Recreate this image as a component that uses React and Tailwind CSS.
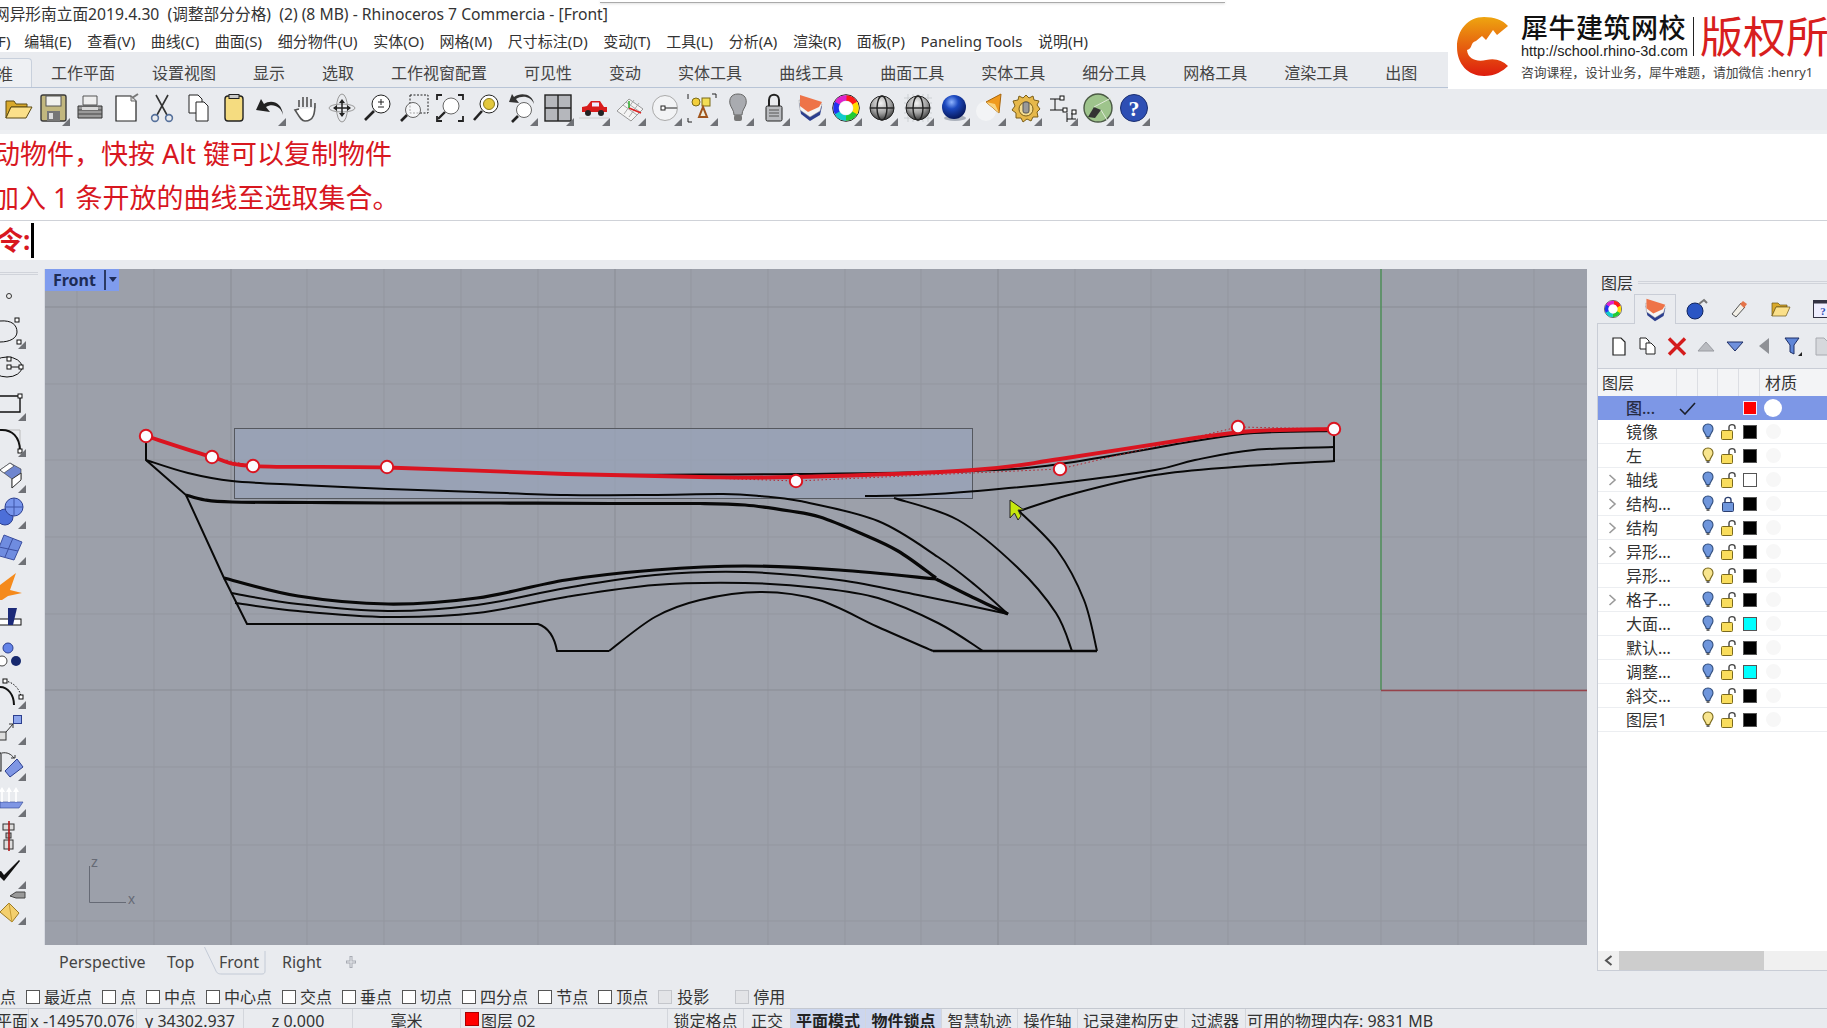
import React from 'react';

const SANS = "[font-family:'Noto_Sans','Noto_Sans_CJK_SC',sans-serif]";

// smooth curve through points (catmull-rom)
function smooth(p) {
    let d = `M${p[0][0]} ${p[0][1]}`;
    for (let i = 0; i < p.length - 1; i++) {
        const a = p[i - 1] || p[i], b = p[i], c = p[i + 1], e = p[i + 2] || c;
        d += ` C${b[0] + (c[0] - a[0]) / 6} ${b[1] + (c[1] - a[1]) / 6} ${c[0] - (e[0] - b[0]) / 6} ${c[1] - (e[1] - b[1]) / 6} ${c[0]} ${c[1]}`;
    }
    return d;
}

const THIN = 2, THICK = 3.2;
const CURVES = [
    { w: THIN, p: [[146, 460], [188, 473], [232, 481], [300, 485], [388, 489], [477, 492], [566, 495], [650, 495], [723, 494], [760, 496], [800, 501], [878, 521], [938, 557], [975, 585], [1008, 614]] },
    { w: THICK, p: [[186, 495], [205, 500], [232, 502], [310, 502.5], [388, 503], [500, 503], [611, 503.5], [700, 503.5], [745, 505], [790, 511], [820, 517], [860, 533], [898, 551], [936, 578]] },
    { w: THICK, p: [[224, 578], [298, 596], [388, 604], [477, 598], [566, 580], [655, 570], [745, 566], [839, 570], [936, 579]] },
    { w: THICK, p: [[936, 579], [970, 596], [1008, 614]] },
    { w: THIN, p: [[231, 593], [298, 604], [388, 611], [477, 605], [566, 588], [655, 575], [745, 572], [839, 580], [918, 595], [1008, 614]] },
    { w: THIN, p: [[235, 603], [298, 611], [388, 617], [477, 613], [566, 597], [655, 585], [745, 583], [819, 588], [878, 598], [938, 623], [983, 651]] },
    { w: THIN, p: [[609, 651], [655, 617], [700, 600], [760, 592], [819, 600], [878, 627], [933, 651]] },
    { w: THIN, p: [[865, 496], [918, 495], [977, 491], [1060, 483], [1155, 470], [1195, 460], [1254, 450], [1334, 447]] },
    { w: THIN, p: [[1019, 511], [1076, 493], [1155, 475], [1234, 467], [1335, 461]] },
    { w: THIN, p: [[894, 498], [958, 520], [1017, 567], [1056, 613], [1072, 651]] },
    { w: THIN, p: [[1019, 511], [1057, 550], [1084, 600], [1097, 651]] },
    { w: THIN, p: [[600, 475], [700, 474.5], [800, 474], [973, 471], [1060, 464], [1195, 441], [1254, 433], [1334, 431]] },
];
const RED = [[146, 436], [212, 457], [253, 466], [387, 467.5], [566, 474], [700, 477], [796, 477], [973, 470], [1060, 459], [1195, 438], [1254, 431], [1334, 429]];
const HANDLES = [[146, 436], [212, 457], [253, 466], [387, 467], [796, 481], [1060, 469], [1238, 427], [1334, 429]];
const VX = [77, 154, 231, 307, 384, 461, 538, 615, 691, 768, 845, 921, 998, 1075, 1151, 1228, 1305, 1381, 1458, 1534];
const HY = [307, 384, 460, 537, 614, 690, 767, 845, 921];
const MAJOR_V = [231, 615, 998];
const MAJOR_H = [307, 690];

function Viewport() {
    return (
        <div className="relative flex-1 h-[676px] bg-[#9ca0aa] overflow-hidden">
            <svg width="1542" height="676" viewBox="45 269 1542 676" className="block">
                {VX.map(x => <line key={x} x1={x} x2={x} y1="269" y2="945" stroke={MAJOR_V.includes(x) ? '#898c94' : '#93969f'} strokeWidth="1" />)}
                {HY.map(y => <line key={y} y1={y} y2={y} x1="45" x2="1587" stroke={MAJOR_H.includes(y) ? '#898c94' : '#93969f'} strokeWidth="1" />)}
                <line x1="1381" x2="1381" y1="269" y2="690" stroke="#4f8f5a" strokeWidth="1.5" />
                <line x1="1381" x2="1587" y1="690.5" y2="690.5" stroke="#96424a" strokeWidth="1.5" />

                <rect x="234.5" y="428.5" width="738" height="70" fill="#98a3b8" fillOpacity="0.75" stroke="#55585f" />

                {CURVES.map((c, i) => <path key={i} d={smooth(c.p)} fill="none" stroke="#080808" strokeWidth={c.w} />)}
                <path d="M146 436V460L186 495L224 578L247 624H538C550 628 555 640 557 651H609" fill="none" stroke="#080808" strokeWidth={THIN} />
                <path d="M933 651H1097" fill="none" stroke="#080808" strokeWidth="2.4" />
                <path d="M1334 429V461" fill="none" stroke="#080808" strokeWidth={THIN} />

                <polyline points={HANDLES.map(p => p.join(',')).join(' ')} fill="none" stroke="#b6202c" strokeWidth="1" strokeDasharray="1.5 2.5" />
                <path d={smooth(RED)} fill="none" stroke="#da1420" strokeWidth="3.8" />
                {HANDLES.map(p => <circle key={p[0]} cx={p[0]} cy={p[1]} r="6.2" fill="#fbfbff" stroke="#da1420" strokeWidth="2" />)}

                <path d="M1010 500L1010 518L1014.5 513L1018 520L1021 516L1018 510L1024 510Z" fill="#c6e80e" stroke="#222" strokeWidth="1" />

                <path d="M89.5 866V902.5H126" fill="none" stroke="#666a75" strokeWidth="1" />
                <text x="91" y="867" fontSize="14" fill="#666a75" fontFamily="Liberation Sans">z</text>
                <text x="128" y="904" fontSize="14" fill="#666a75" fontFamily="Liberation Sans">x</text>
            </svg>
            <div className={`absolute left-0 top-0 w-[74px] h-[22px] bg-[#7f9cee] flex items-center pl-[8px] text-[16px] font-bold text-[#1d2b55] ${SANS}`}>
                <span className="w-[52px]">Front</span>
                <span className="w-[2px] h-[20px] bg-[#2c3a63]"></span>
                <svg width="12" height="8" viewBox="0 0 12 8" className="ml-[1px]"><path d="M2 1H10L6 6Z" fill="#1d2b55" /></svg>
            </div>
        </div>
    );
}

const Wheel = ({ size = 28 }) => (
    <svg width={size} height={size} viewBox="0 0 28 28">
        <circle cx="14" cy="14" r="13.3" fill="none" stroke="#222" strokeWidth="1" />
        {['#ff1a1a', '#ffdd00', '#22cc33', '#11cccc', '#2233ee', '#dd22cc'].map((c, i) => (
            <circle key={c} cx="14" cy="14" r="10" fill="none" stroke={c} strokeWidth="5.5" pathLength="6" strokeDasharray="1.05 4.95" strokeDashoffset={-i + 1.5} />
        ))}
        <circle cx="14" cy="14" r="6.8" fill="#fff" />
    </svg>
);

const Layers = ({ size = 28 }) => (
    <svg width={size} height={size} viewBox="0 0 28 28">
        <path d="M3 9L26 12L24 21L14 27L5 20Z" fill="#2c3f8f" />
        <path d="M3 6L26 10L24 17L14 23L4 16Z" fill="#f4f4f4" stroke="#999" strokeWidth=".5" />
        <path d="M4 1L26 8L23 13L12 18L4 12Z" fill="#ee7348" />
    </svg>
);

const BlueBall = ({ size = 28 }) => (
    <svg width={size} height={size} viewBox="0 0 28 28">
        <defs><radialGradient id="ball" cx=".4" cy=".3" r=".7"><stop offset="0" stopColor="#8fb4ff" /><stop offset=".4" stopColor="#1c49c0" /><stop offset="1" stopColor="#07185c" /></radialGradient></defs>
        <ellipse cx="15" cy="24" rx="11" ry="3" fill="#aab0bb" />
        <circle cx="14" cy="13" r="12" fill="url(#ball)" />
    </svg>
);

const GraySphere = () => (
    <>
        <defs><radialGradient id="gs" cx=".45" cy=".3" r=".75"><stop offset="0" stopColor="#f4f4f4" /><stop offset=".55" stopColor="#a0a0a0" /><stop offset="1" stopColor="#2c2c2c" /></radialGradient></defs>
        <circle cx="15" cy="15" r="12" fill="url(#gs)" stroke="#222" />
        <ellipse cx="15" cy="15" rx="5" ry="12" fill="none" stroke="#222" strokeWidth="1.4" />
        <path d="M3 15H27" stroke="#222" strokeWidth="1.4" />
    </>
);

const S = ({ children }) => <svg width="30" height="30" viewBox="0 0 30 30">{children}</svg>;

const TOOLS = [
    [<S><path d="M3 8H11L13 11H24V14H8L3 25Z" fill="#d9a92b" stroke="#5c4a12" /><path d="M8 14H29L23 25H3Z" fill="#fbe08a" stroke="#5c4a12" /></S>, false],
    [<S><rect x="2" y="2" width="25" height="26" rx="2" fill="#c2b77e" stroke="#3a3a3a" strokeWidth="1.4" /><rect x="7" y="3" width="15" height="10" fill="#f1f1ef" stroke="#555" /><rect x="8" y="18" width="13" height="10" fill="#777" /><rect x="10" y="20" width="4" height="6" fill="#ddd" /></S>, true],
    [<S><path d="M8 3H22V12H8Z" fill="#eee" stroke="#555" /><path d="M3 13H27V25H3Z" fill="#9a9a9a" stroke="#333" /><path d="M3 17H27M3 21H27" stroke="#444" /><rect x="7" y="14" width="16" height="3" fill="#d8d8d8" /></S>, false],
    [<S><path d="M5 3H20L25 8V28H5Z" fill="#fff" stroke="#222" strokeWidth="1.2" /><path d="M20 3V8H25" fill="#ddd" stroke="#666" /><path d="M21 5L27 1" stroke="#777" strokeWidth="2" /></S>, false],
    [<S><path d="M9 2L20 22M21 2L10 22" stroke="#333" strokeWidth="1.6" /><circle cx="8" cy="25" r="3.4" fill="none" stroke="#56719c" strokeWidth="1.6" /><circle cx="22" cy="25" r="3.4" fill="none" stroke="#56719c" strokeWidth="1.6" /></S>, false],
    [<S><path d="M6 2H15L19 6V20H6Z" fill="#fff" stroke="#222" /><path d="M13 9H21L25 13V28H13Z" fill="#fff" stroke="#222" /></S>, false],
    [<S><rect x="6" y="3" width="18" height="25" rx="3" fill="#f5dc80" stroke="#222" strokeWidth="1.4" /><rect x="10" y="1.5" width="10" height="4" fill="#c9c9c9" stroke="#222" /></S>, false],
    [<S><path d="M28 22C26 13 17 10 11 14L15 19L1 17L6 6L9 11C16 6 27 9 28 22Z" fill="#222" /></S>, true],
    [<S><path d="M8 14V7M12 14V4M16 14V4M20 14V6M24 15V10C24 20 23 28 14 28C10 28 8 23 4 17L8 16" fill="#fff" stroke="#555" strokeWidth="1.6" /></S>, false],
    [<S><ellipse cx="15" cy="15" rx="5.5" ry="14" fill="none" stroke="#999" /><ellipse cx="15" cy="15" rx="13" ry="4" fill="none" stroke="#999" /><path d="M15 8V23M8 15H23" stroke="#222" strokeWidth="1.5" /><path d="M15 6L18 10H12ZM15 24L12 20H18ZM24 15L20 18V12ZM6 15L10 12V18Z" fill="#222" /></S>, false],
    [<S><circle cx="18" cy="11" r="9" fill="#fff" stroke="#222" /><path d="M11 18L2 27" stroke="#222" strokeWidth="2.6" /><path d="M18 6V12M15 9H21M15 14H21" stroke="#222" /></S>, false],
    [<S><rect x="11" y="2" width="18" height="18" fill="none" stroke="#222" strokeDasharray="2 1.5" /><circle cx="14" cy="17" r="7.5" fill="#fff" fillOpacity=".6" stroke="#666" /><path d="M8 22L2 28" stroke="#222" strokeWidth="2.6" /></S>, false],
    [<S><path d="M2 7V2H7M23 2H28V7M28 23V28H23M7 28H2V23" fill="none" stroke="#222" strokeWidth="1.8" /><circle cx="16" cy="13" r="8" fill="#fff" stroke="#666" /><path d="M10 19L3 26" stroke="#222" strokeWidth="2.4" /></S>, false],
    [<S><circle cx="18" cy="11" r="9" fill="#fff" stroke="#222" /><circle cx="18" cy="11" r="5.5" fill="#e3c83c" stroke="#8a7a1a" /><path d="M11 18L3 27" stroke="#222" strokeWidth="2.6" /></S>, false],
    [<S><circle cx="17" cy="17" r="7.5" fill="#fff" stroke="#666" /><path d="M11 23L5 29" stroke="#222" strokeWidth="2.6" /><path d="M27 11C24 3 15 2 9 6L12 10L2 9L5 1L7 4C14 -1 26 1 27 11Z" fill="#333" /></S>, true],
    [<S><rect x="2" y="2" width="26" height="26" fill="#b5b7bc" stroke="#222" strokeWidth="1.4" /><path d="M15 2V28M2 15H28" stroke="#222" strokeWidth="1.4" /></S>, true],
    [<S><path d="M3 19V14L8 13L12 8H21L25 14H28V19Z" fill="#d81c1c" /><rect x="13" y="9.5" width="7" height="4" fill="#eef" /><circle cx="9" cy="20" r="3" fill="#222" /><circle cx="22" cy="20" r="3" fill="#222" /><path d="M0 25H30" stroke="#ccc" /></S>, true],
    [<S><path d="M2 18L14 6L28 16L16 28Z" fill="#f4f4f4" stroke="#999" /><path d="M8 12L22 22M11 9L25 19M14 24L24 10M9 21L19 7" stroke="#aaa" /><path d="M14 15L26 20" stroke="#d22" strokeWidth="1.6" /><path d="M14 15V8" stroke="#2a2" strokeWidth="1.4" /></S>, true],
    [<S><circle cx="14" cy="15" r="12.5" fill="#f2f3f5" stroke="#aaa" /><rect x="10" y="13" width="4" height="4" fill="#fff" stroke="#222" /><path d="M14 15H26" stroke="#222" /></S>, true],
    [<S><path d="M1 6V1M25 1H29V5M1 25V29H5" fill="none" stroke="#222" /><circle cx="9" cy="9" r="4" fill="#f3cf3c" stroke="#7a6a18" /><rect x="15" y="5" width="8" height="8" fill="#f3dd55" stroke="#7a6a18" /><path d="M12 24L16 14L20 24Z" fill="#eed" stroke="#a0541c" strokeWidth="2" /></S>, true],
    [<S><path d="M15 1C8 1 6 6 7 11C8 15 11 17 11 22H19C19 17 22 15 23 11C24 6 22 1 15 1Z" fill="#a9abb0" stroke="#666" /><rect x="11" y="22" width="8" height="6" rx="2" fill="#777" /></S>, true],
    [<S><path d="M10 13V7C10 0 20 0 20 7V13" fill="none" stroke="#222" strokeWidth="2" /><rect x="7" y="13" width="16" height="15" rx="1.5" fill="#b9bbbf" stroke="#222" /><path d="M10 17H20M10 20H20M10 23H20" stroke="#555" /></S>, true],
    [<Layers />, true],
    [<Wheel />, true],
    [<S><GraySphere /></S>, true],
    [<S><path d="M1 5H29M1 10H29M1 15H29M1 20H29M1 25H29M5 1V29M10 1V29M15 1V29M20 1V29M25 1V29" stroke="#c2c4c8" strokeWidth=".7" /><GraySphere /></S>, true],
    [<BlueBall />, true],
    [<S><circle cx="11" cy="18" r="10" fill="#f3f4f6" /><path d="M26 1L24 20L11 9Z" fill="#f09a1e" stroke="#a8660e" /><path d="M24 20L11 9L20 11Z" fill="#f9d480" /></S>, true],
    [<S><path d="M15 2L18 5L22 3L23 7L28 8L26 12L29 16L26 19L27 24L22 24L20 28L16 26L12 29L10 25L5 25L5 20L1 17L4 13L2 8L7 7L8 3L12 5Z" fill="#e6b84a" stroke="#7c5f18" /><circle cx="15" cy="16" r="7" fill="#f4dc90" stroke="#7c5f18" /><rect x="12" y="9" width="6" height="11" rx="2" fill="#999" stroke="#555" /></S>, true],
    [<S><path d="M3 6H13M3 17H16M8 6V17M20 20V29M20 26H29M25 20V26" fill="none" stroke="#111" /><rect x="13" y="3" width="4" height="4" fill="#fff" stroke="#111" /><rect x="16" y="15" width="4" height="4" fill="#fff" stroke="#111" /><rect x="25" y="17" width="4" height="4" fill="#fff" stroke="#111" /></S>, true],
    [<S><circle cx="15" cy="15" r="14" fill="#9ec48c" stroke="#4b5a45" strokeWidth="1.4" /><path d="M5 24L11 14L18 17L12 25Z" fill="#333" /><path d="M11 14L28 5M18 17L24 27" stroke="#dfe9d8" /></S>, true],
    [<S><circle cx="15" cy="15" r="13.5" fill="#2e4fb4" stroke="#1b2f70" /><text x="15" y="23" textAnchor="middle" fontSize="22" fontWeight="bold" fill="#fff" fontFamily="Liberation Serif">?</text></S>, true],
];

const Tri = ({ className }) => (
    <svg width="8" height="8" viewBox="0 0 8 8" className={`absolute ${className}`}><path d="M8 0V8H0Z" fill="#6f7176" /></svg>
);

function Toolbar() {
    return (
        <div className="h-[46px] bg-[#e9ebef] border-t border-b-[4px] border-t-[#e9ebef] border-b-[#edeff2] flex">
            {TOOLS.map(([icon, tri], i) => (
                <div key={i} className="relative w-[36px] h-[37px] flex items-center justify-center">
                    {icon}
                    {tri && <Tri className="right-[2px] bottom-0" />}
                </div>
            ))}
        </div>
    );
}

const B = '#111';
const SIDE = [
    [<circle cx="9" cy="19" r="2.5" fill="#eee" stroke="#333" />, false],
    [<><path d="M0 8C12 7 17 12 17 19C17 25 10 29 0 29" fill="none" stroke={B} /><rect x="15" y="5" width="4" height="4" fill="#fff" stroke={B} /><rect x="17" y="27" width="4" height="4" fill="#fff" stroke={B} /></>, true],
    [<><ellipse cx="7" cy="18" rx="15" ry="10" fill="none" stroke={B} /><path d="M9 18H21" stroke={B} /><rect x="7" y="8" width="4" height="4" fill="#fff" stroke={B} /><rect x="7" y="16" width="4" height="4" fill="#fff" stroke={B} /><rect x="19" y="16" width="4" height="4" fill="#fff" stroke={B} /></>, false],
    [<><path d="M0 11H20V27H0" fill="none" stroke={B} strokeWidth="1.4" /><rect x="18" y="9" width="4" height="4" fill="#fff" stroke={B} /></>, true],
    [<><path d="M0 9H20V30" fill="none" stroke="#bbb" /><path d="M0 9C12 8 20 16 20 30" fill="none" stroke={B} strokeWidth="2" /><rect x="18" y="28" width="4" height="4" fill="#fff" stroke={B} /></>, true],
    [<><path d="M0 13L10 6L21 12V22L12 31V22L0 13Z" fill="#6f86cf" stroke="#333" strokeWidth=".6" /><path d="M0 13L10 6L14 9L4 16Z" fill="#fff" stroke="#333" strokeWidth=".6" /><path d="M12 22L21 16V23L12 31Z" fill="#fff" stroke="#333" /></>, true],
    [<><circle cx="5" cy="24" r="8" fill="#4d6fd8" stroke="#2c3f8f" /><circle cx="14" cy="14" r="9" fill="#7795ec" stroke="#2c3f8f" /><path d="M5 14H23M14 5V23" stroke="#3f55a8" /></>, true],
    [<path d="M4 6L22 13L14 31L-4 26Z M13 9L5 28 M-1 18L18 22" fill="#6f8ce0" stroke="#3c4fa0" />, true],
    [<path d="M16 8L10 25L22 28L8 31L2 35H0V20Z" fill="#f58a1c" />, false],
    [<><rect x="-1" y="18" width="22" height="6" fill="#fff" stroke={B} /><path d="M8 7H17L13 24H8Z" fill="#1c2a78" /></>, false],
    [<><circle cx="8" cy="11" r="5" fill="#6484e8" stroke="#2c3f8f" /><circle cx="2" cy="24" r="5" fill="#fff" stroke="#444" /><circle cx="16" cy="24" r="5" fill="#17296e" /></>, false],
    [<><path d="M0 14C8 14 14 22 14 32" fill="none" stroke={B} strokeWidth="2" /><path d="M5 8C13 9 19 15 21 23" fill="none" stroke={B} strokeDasharray="1.5 1.5" /><rect x="3" y="6" width="4" height="4" fill="#fff" stroke={B} /><rect x="19" y="22" width="4" height="4" fill="#fff" stroke={B} /></>, true],
    [<><rect x="-3" y="23" width="9" height="8" fill="#ddd" stroke="#333" /><rect x="13.5" y="6.5" width="8" height="8" fill="#8ea6ec" stroke="#2c3f8f" /><path d="M6 23L13 15M9 15H13V19" fill="none" stroke="#333" /></>, true],
    [<><rect x="-5" y="8" width="6" height="18" fill="none" stroke={B} /><path d="M17 14L23 22L10 32L5 26Z" fill="#7f96e4" stroke="#2c3f8f" /><path d="M2 8C7 7 11 9 14 13M11 13H15V10" fill="none" stroke="#333" /></>, true],
    [<><path d="M0 21H23L19 27H0Z" fill="#7f96e4" stroke="#2c3f8f" strokeWidth=".6" /><path d="M2 21V9M9 21V9M16 21V9" stroke="#fff" strokeWidth="1.6" /><path d="M2 6L5 11H-1ZM9 6L12 11H6ZM16 6L19 11H13Z" fill="#fff" /></>, true],
    [<><rect x="3" y="7" width="11" height="6" fill="#ddd" stroke="#333" /><rect x="6" y="16" width="5" height="5" fill="#bbb" stroke="#333" /><rect x="4" y="23" width="9" height="9" fill="#ddd" stroke="#333" /><path d="M9 4V34" stroke="#b01818" strokeWidth="1.6" /></>, true],
    [<path d="M-2 19L1 18L4 22L19 7L20 8L4 28L-2 22Z" fill={B} />, true],
    [<><path d="M10 7L16 3H25V9H16Z" fill="#999" stroke="#444" /><path d="M9 14L19 24L12 33L0 23Z" fill="#f3cf6d" stroke="#9b7a25" /><path d="M9 14L12 33" stroke="#c79d35" /></>, true],
];

function LeftBar() {
    return (
        <div className="w-[45px] h-[676px] flex flex-col overflow-hidden border-r border-[#d8dbe2]">
            <div className="h-[8px] flex flex-col justify-center"><div className="h-[3px] w-[38px] border-y border-[#d0d3da]"></div></div>
            {SIDE.map(([icon, tri], i) => (
                <div key={i} className="relative h-[36px] shrink-0">
                    <svg width="30" height="36" viewBox="0 0 30 36" className="block">{icon}</svg>
                    {tri && <Tri className="left-[18px] bottom-0" />}
                </div>
            ))}
        </div>
    );
}

const Bulb = ({ on }) => (
    <svg width="12" height="17" viewBox="0 0 12 17">
        <path d="M6 1C2.5 1 1 3.5 1 6C1 9 4 10.5 4.2 13.5H7.8C8 10.5 11 9 11 6C11 3.5 9.5 1 6 1Z" fill={on ? '#6f96dc' : '#f8e58f'} stroke={on ? '#34507f' : '#7b6a1e'} strokeWidth="1.1" />
        <path d="M4.5 15H7.5" stroke="#444" strokeWidth="1.6" />
    </svg>
);

const Lock = ({ closed }) => (
    <svg width="17" height="17" viewBox="0 0 17 17">
        {closed
            ? <path d="M5 8V5C5 1.5 11 1.5 11 5V8" fill="none" stroke="#2c3f6f" strokeWidth="1.4" />
            : <path d="M9 8V4C9 .8 15 .8 15 4V6" fill="none" stroke="#444" strokeWidth="1.4" />}
        <rect x={closed ? 2.5 : 1.5} y="7.5" width="11" height="9" rx="1" fill={closed ? '#6f96dc' : '#f9dd5c'} stroke={closed ? '#2c3f6f' : '#7b6a1e'} />
    </svg>
);

const LAYERS = [
    { name: '镜像', on: true, color: 'bg-black' },
    { name: '左', on: false, color: 'bg-black' },
    { name: '轴线', on: true, color: 'bg-white', arrow: true },
    { name: '结构...', on: true, closed: true, color: 'bg-black', arrow: true },
    { name: '结构', on: true, color: 'bg-black', arrow: true },
    { name: '异形...', on: true, color: 'bg-black', arrow: true },
    { name: '异形...', on: false, color: 'bg-black' },
    { name: '格子...', on: true, color: 'bg-black', arrow: true },
    { name: '大面...', on: true, color: 'bg-[#00ffff]' },
    { name: '默认...', on: true, color: 'bg-black' },
    { name: '调整...', on: true, color: 'bg-[#00ffff]' },
    { name: '斜交...', on: true, color: 'bg-black' },
    { name: '图层1', on: false, color: 'bg-black' },
];

const PANEL_TABS = [
    <Wheel size={18} />,
    <Layers size={24} />,
    <svg width="26" height="22" viewBox="0 0 26 22"><circle cx="11" cy="13" r="8" fill="#2a55c4" stroke="#10245f" /><path d="M15 6L20 2L23 5" fill="none" stroke="#777" strokeWidth="2" /></svg>,
    <svg width="18" height="20" viewBox="0 0 18 20"><path d="M2 15L11 4L15 8L6 18Z" fill="#f2efe6" stroke="#555" /><path d="M10 5L13 2L17 5L14 9Z" fill="#e4744a" /></svg>,
    <svg width="20" height="16" viewBox="0 0 20 16"><path d="M1 2H7L9 4H16V6H5L1 15Z" fill="#d9a92b" stroke="#6b5414" strokeWidth=".7" /><path d="M5 6H19L15 15H1Z" fill="#fbe08a" stroke="#6b5414" strokeWidth=".7" /></svg>,
    <svg width="20" height="18" viewBox="0 0 20 18"><rect x=".5" y=".5" width="19" height="17" fill="#eef" stroke="#334" /><rect x=".5" y=".5" width="19" height="3" fill="#334" /><text x="10" y="15" textAnchor="middle" fontSize="11" fontWeight="bold" fill="#2e4fb4" fontFamily="Liberation Serif">?</text></svg>,
];

const PANEL_TOOLS = [
    <svg width="16" height="19" viewBox="0 0 16 19"><path d="M2 1H10L14 5V18H2Z" fill="#fff" stroke="#222" strokeWidth="1.2" /></svg>,
    <svg width="17" height="18" viewBox="0 0 17 18"><path d="M1 1H7L10 4V12H1Z" fill="#fff" stroke="#222" /><path d="M7 6H12L16 10V17H7Z" fill="#fff" stroke="#222" /></svg>,
    <svg width="20" height="19" viewBox="0 0 20 19"><path d="M2 1.5L18 17.5M18 1.5L2 17.5" stroke="#d41c1c" strokeWidth="3.4" /></svg>,
    <svg width="18" height="11" viewBox="0 0 18 11"><path d="M9 1L17 10H1Z" fill="#b9bbc0" stroke="#9a9ca2" /></svg>,
    <svg width="18" height="11" viewBox="0 0 18 11"><path d="M1 1H17L9 10Z" fill="#6f90dc" stroke="#1f2f66" /></svg>,
    <svg width="12" height="18" viewBox="0 0 12 18"><path d="M11 1V17L1 9Z" fill="#8f9196" /></svg>,
    <svg width="18" height="19" viewBox="0 0 18 19"><path d="M1 1H15L10 8V17L6 15V8Z" fill="#5f86d8" stroke="#1f2f66" /><path d="M18 19V15L14 19Z" fill="#222" /></svg>,
    <svg width="16" height="19" viewBox="0 0 16 19"><path d="M2 1H10L14 5V18H2Z" fill="#d6d8dc" stroke="#a8aab0" /></svg>,
];

function LayerPanel() {
    return (
        <div className={`w-[240px] h-[725px] bg-[#e9ebef] flex flex-col text-[16px] text-[#333] ${SANS}`}>
            <div className="h-[34px] pt-[11px] pl-[14px] flex items-center shrink-0">
                <span className="leading-none">图层</span>
                <span className="flex-1 ml-[5px] h-[3px] border-y border-[#d0d3da]"></span>
            </div>
            <div className="h-[29px] flex pl-[5px] shrink-0">
                {PANEL_TABS.map((t, i) => (
                    <div key={i} className={`w-[42px] shrink-0 flex items-center justify-center ${i === 1 ? 'border border-b-0 border-[#c9cdd6] h-[30px] bg-[#e9ebef] relative z-10' : ''}`}>{t}</div>
                ))}
            </div>
            <div className="ml-[10px] h-[648px] border border-r-0 border-[#c9cdd6] flex flex-col">
                <div className="h-[45px] flex items-center pl-[6px] border-b border-[#c9cdd6] shrink-0 overflow-hidden">
                    {PANEL_TOOLS.map((t, i) => <div key={i} className="w-[29px] shrink-0 flex justify-center">{t}</div>)}
                </div>
                <div className="h-[27px] flex bg-[#f3f4f6] shrink-0 items-center">
                    <span className="w-[79px] pl-[4px] h-full flex items-center border-r border-[#dcdee3]">图层</span>
                    <span className="w-[21px] h-full border-r border-[#dcdee3]"></span>
                    <span className="w-[20px] h-full border-r border-[#dcdee3]"></span>
                    <span className="w-[21px] h-full border-r border-[#dcdee3]"></span>
                    <span className="w-[21px] h-full border-r border-[#dcdee3]"></span>
                    <span className="pl-[5px]">材质</span>
                </div>
                <div className="h-[24px] flex items-center bg-[#7d97e6] shrink-0">
                    <span className="w-[28px]"></span>
                    <span className="w-[50px] font-medium text-[#262c44]">图...</span>
                    <span className="w-[22px] flex justify-center"><svg width="17" height="13" viewBox="0 0 17 13"><path d="M1 7L6 12L16 1" fill="none" stroke="#1b1f2b" strokeWidth="1.6" /></svg></span>
                    <span className="w-[41px]"></span>
                    <span className="w-[21px] flex justify-center"><span className="w-[14px] h-[14px] bg-[#ff0000] border border-[#eef]"></span></span>
                    <span className="w-[26px] flex justify-center"><span className="w-[18px] h-[18px] rounded-full bg-white"></span></span>
                </div>
                {LAYERS.map((l, i) => (
                    <div key={i} className="h-[24px] flex items-center border-b border-[#eceef1] bg-white shrink-0">
                        <span className="w-[28px] flex justify-center">
                            {l.arrow && <svg width="9" height="12" viewBox="0 0 9 12"><path d="M1.5 1L7 6L1.5 11" fill="none" stroke="#9a9a9a" strokeWidth="1.6" /></svg>}
                        </span>
                        <span className="w-[50px] whitespace-nowrap">{l.name}</span>
                        <span className="w-[22px]"></span>
                        <span className="w-[20px] flex justify-center"><Bulb on={l.on} /></span>
                        <span className="w-[21px] flex justify-center"><Lock closed={l.closed} /></span>
                        <span className="w-[21px] flex justify-center"><span className={`w-[14px] h-[14px] border border-[#555] ${l.color}`}></span></span>
                        <span className="w-[26px] flex justify-center"><span className="w-[15px] h-[15px] rounded-full bg-[#f7f7f7]"></span></span>
                    </div>
                ))}
                <div className="flex-1 bg-white"></div>
                <div className="h-[19px] flex bg-[#f0f0f0] shrink-0">
                    <span className="w-[21px] flex items-center justify-center"><svg width="9" height="11" viewBox="0 0 9 11"><path d="M7.5 1L2 5.5L7.5 10" fill="none" stroke="#555" strokeWidth="2" /></svg></span>
                    <span className="w-[145px] bg-[#cdcdcd]"></span>
                </div>
            </div>
        </div>
    );
}

const MENU = ['编辑(E)', '查看(V)', '曲线(C)', '曲面(S)', '细分物件(U)', '实体(O)', '网格(M)', '尺寸标注(D)', '变动(T)', '工具(L)', '分析(A)', '渲染(R)', '面板(P)', 'Paneling Tools', '说明(H)'];
const TABS = ['工作平面', '设置视图', '显示', '选取', '工作视窗配置', '可见性', '变动', '实体工具', '曲线工具', '曲面工具', '实体工具', '细分工具', '网格工具', '渲染工具', '出图'];
const SNAPS = ['最近点', '点', '中点', '中心点', '交点', '垂点', '切点', '四分点', '节点', '顶点'];
const STATUS = [
    { t: '平面', w: 'w-[29px] justify-end' },
    { t: 'x -149570.076', w: 'w-[108px] justify-center' },
    { t: 'y 34302.937', w: 'w-[107px] justify-center' },
    { t: 'z 0.000', w: 'w-[109px] justify-center' },
    { t: '毫米', w: 'w-[108px] justify-center' },
];
const STATUS2 = [
    { t: '锁定格点', w: 'w-[76px]' },
    { t: '正交', w: 'w-[47px]' },
    { t: '平面模式', w: 'w-[75px]', on: true },
    { t: '物件锁点', w: 'w-[76px]', on: true },
    { t: '智慧轨迹', w: 'w-[76px]' },
    { t: '操作轴', w: 'w-[60px]' },
    { t: '记录建构历史', w: 'w-[107px]' },
    { t: '过滤器', w: 'w-[61px]' },
];

export default function App() {
    return (
        <div className={`relative w-[1827px] h-[1028px] overflow-hidden bg-[#e9ebef] text-[#333] flex flex-col ${SANS}`}>
            {/* dialog edge at the very top */}
            <div className="absolute left-[600px] top-0 w-[625px] h-[3px] bg-white border-b border-[#aaa] shadow-sm z-10"></div>

            {/* watermark */}
            <div className="absolute right-0 top-0 w-[379px] h-[89px] bg-white z-10 overflow-hidden flex items-start">
                <svg width="73" height="89" viewBox="0 0 73 89" className="shrink-0">
                    <defs><linearGradient id="logo" x1="0" y1="0" x2="0" y2="1"><stop offset="0" stopColor="#eea510" /><stop offset="1" stopColor="#de1c0e" /></linearGradient></defs>
                    <path d="M60 26C55 20 46 17 36 17C20 17 9 30 9 47C9 64 20 76 36 76C47 76 55 71 60 66C54 60 47 58 38 60C30 62 20 60 19 50C25 49 22 42 28 41L34 36L38 40L45 30L49 35Z" fill="url(#logo)" />
                </svg>
                <div className="w-[172px] shrink-0 flex flex-col pt-[13px]">
                    <span className="h-[30px] text-[27px] leading-[30px] font-medium text-[#111] whitespace-nowrap tracking-[0.5px]">犀牛建筑网校</span>
                    <span className="h-[16px] text-[14.5px] leading-[16px] text-[#222] whitespace-nowrap [font-family:'Liberation_Sans',sans-serif]">http://school.rhino-3d.com</span>
                    <span className="mt-[4px] text-[12.8px] leading-[18px] text-[#444] whitespace-nowrap">咨询课程，设计业务，犀牛难题，请加微信 :henry1</span>
                </div>
                <span className="w-[1px] h-[39px] mt-[17px] bg-[#222] shrink-0"></span>
                <span className="ml-[6px] text-[43px] leading-[52px] mt-[11px] text-[#d81e1e] whitespace-nowrap">版权所有</span>
            </div>

            {/* title + menu */}
            <div className="h-[26px] bg-white flex items-end shrink-0 overflow-hidden">
                <span className="-ml-[6px] text-[15.7px] leading-[24px] whitespace-pre text-[#333]">网异形南立面2019.4.30  (调整部分分格)  (2) (8 MB) - Rhinoceros 7 Commercia - [Front]</span>
            </div>
            <div className="h-[26px] pt-[4px] bg-white flex items-center shrink-0 text-[15px] text-[#333] gap-[15.6px] overflow-hidden whitespace-nowrap">
                <span className="-ml-[2px] -mr-[2px]">F)</span>
                {MENU.map(m => <span key={m}>{m}</span>)}
            </div>

            {/* ribbon tabs */}
            <div className="h-[36px] flex items-end shrink-0 text-[16px] text-[#444] border-b border-[#b8c4d6] overflow-hidden whitespace-nowrap">
                <span className="relative -ml-[3px] h-[30px] w-[35px] flex items-center justify-end pr-[18px] bg-[#eef0f3] border-r border-t border-[#c8d0dc] rounded-tr -mb-px">准</span>
                <span className="flex gap-[37px] h-[35px] pt-[6px] items-center ml-[19px]">
                    {TABS.map((t, i) => <span key={i}>{t}</span>)}
                </span>
            </div>

            <Toolbar />

            {/* command area */}
            <div className="h-[87px] bg-white border-b border-[#cfd2d8] shrink-0 text-[27px] text-[#d8171f] overflow-hidden whitespace-nowrap">
                <div className="h-[41px] flex items-center -ml-[7px]">动物件，快按 Alt 键可以复制物件</div>
                <div className="h-[45px] pt-[2px] flex items-center -ml-[8px]">加入 1 条开放的曲线至选取集合。</div>
            </div>
            <div className="h-[39px] bg-white shrink-0 flex items-center overflow-hidden">
                <span className="-ml-[3px] text-[26px] font-bold text-[#d8171f] w-[34px]">令:</span>
                <span className="w-[3px] h-[35px] bg-black"></span>
            </div>

            {/* main */}
            <div className="flex h-[725px] shrink-0">
                <div className="w-[1587px] flex flex-col">
                    <div className="h-[9px]"></div>
                    <div className="flex">
                        <LeftBar />
                        <Viewport />
                    </div>
                    <div className="h-[40px] flex items-center pl-[59px] text-[16px] text-[#444] pb-[7px]">
                        <span className="w-[108px]">Perspective</span>
                        <span className="w-[37px]">Top</span>
                        <span className="relative w-[78px] pl-[15px] h-[29px] flex items-center">
                            Front
                            <svg width="62" height="30" viewBox="0 0 62 30" className="absolute left-0 top-0"><path d="M.5 0L12 24C13 26 14 27 18 27H58C60 27 61 26 61 24V4" fill="none" stroke="#c3cad6" /></svg>
                        </span>
                        <span className="w-[63px]">Right</span>
                        <svg width="12" height="14" viewBox="0 0 12 14"><path d="M6 1V13M1 7H11" stroke="#a8abb3" strokeWidth="3" /><path d="M6 2V12M2 7H10" stroke="#e9ebef" strokeWidth="1" /></svg>
                    </div>
                </div>
                <LayerPanel />
            </div>

            {/* osnap row */}
            <div className="h-[23px] flex items-center shrink-0 text-[16px] text-[#333] overflow-hidden whitespace-nowrap">
                <span className="-ml-[16px] w-[42px] shrink-0">端点</span>
                {SNAPS.map(s => (
                    <span key={s} className="flex items-center mr-[10px] shrink-0">
                        <span className="w-[14px] h-[14px] mr-[4px] bg-white border border-[#555]"></span>{s}
                    </span>
                ))}
                <span className="flex items-center shrink-0 mr-[26px]">
                    <span className="w-[14px] h-[14px] mr-[5px] bg-[#e3e4e7] border border-[#c4c6cb]"></span>投影
                </span>
                <span className="flex items-center shrink-0">
                    <span className="w-[14px] h-[14px] mr-[4px] bg-[#e3e4e7] border border-[#c4c6cb]"></span>停用
                </span>
            </div>

            {/* status row */}
            <div className="h-[20px] flex border-t border-[#c4c8d0] shrink-0 text-[16px] text-[#333] overflow-hidden whitespace-nowrap leading-[24px]">
                {STATUS.map(s => (
                    <span key={s.t} className={`${s.w} flex h-[26px] border-r border-[#d3d6dc] shrink-0 overflow-hidden`}>{s.t}</span>
                ))}
                <span className="w-[207px] flex items-start border-r border-[#d3d6dc] shrink-0 pl-[4px]">
                    <span className="w-[14px] h-[14px] bg-[#ff0000] border border-[#a00] mt-[3px] mr-[2px]"></span>图层 02
                </span>
                {STATUS2.map(s => (
                    <span key={s.t} className={`${s.w} flex justify-center border-r border-[#d3d6dc] shrink-0 ${s.on ? 'bg-[#ccd6ee] font-bold text-[#222]' : ''}`}>{s.t}</span>
                ))}
                <span className="pl-[1px]">可用的物理内存: 9831 MB</span>
            </div>
        </div>
    );
}
